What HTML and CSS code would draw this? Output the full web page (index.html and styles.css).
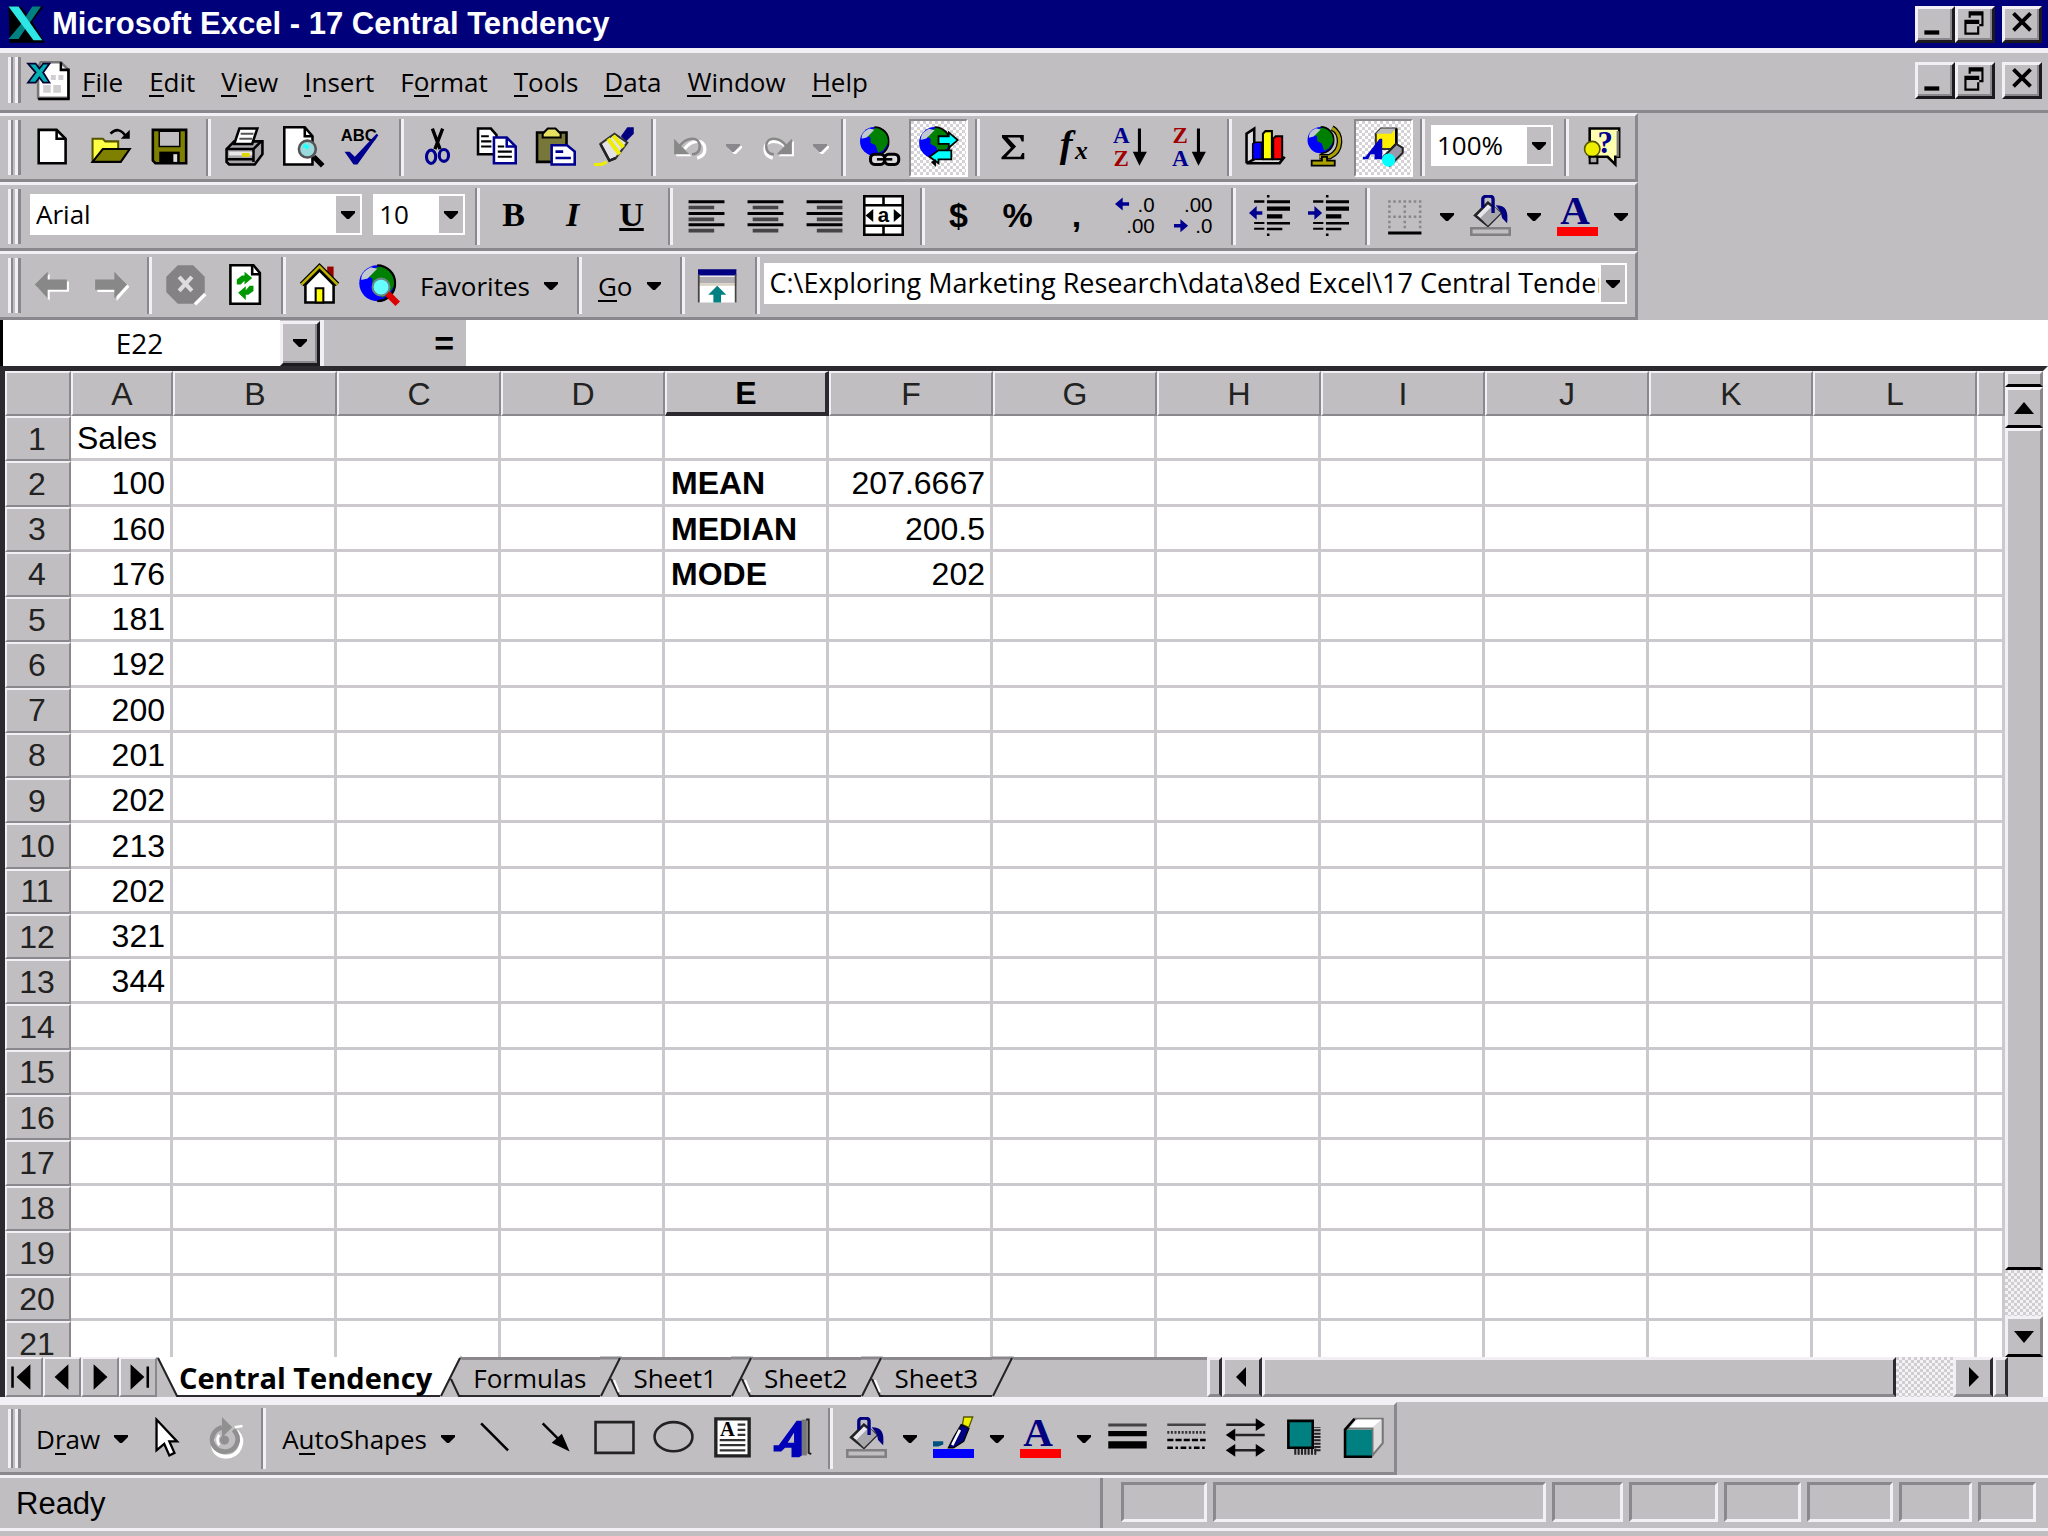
FILE: index.html
```
<!DOCTYPE html>
<html lang="en">
<head>
  <meta charset="UTF-8">
  <meta name="viewport" content="width=device-width, initial-scale=1.0">
  <title>Microsoft Excel - 17 Central Tendency</title>
  <link rel="stylesheet" href="styles.css">
</head>
<body>
  <svg class="defs" aria-hidden="true">
    <symbol id="caret" viewBox="0 0 14 8"><path d="M0 0h14v2L8 8H6L0 2z" fill="currentColor"/></symbol>
    <symbol id="minimize" viewBox="0 0 16 14"><path d="M3 10h7v2H3z"/></symbol>
    <symbol id="restore" viewBox="0 0 16 14">
      <path d="M5 1h7v7H9V7h2V3H6v1H5zM3 5h7v7H3zm1 2v4h5V7z" fill-rule="evenodd"/>
    </symbol>
    <symbol id="close" viewBox="0 0 16 14"><path d="M4 2l8 8M12 2l-8 8" stroke="#000" stroke-width="1.8"/></symbol>
    <symbol id="globe" viewBox="0 0 12 12">
      <circle cx="6" cy="6" r="5.6" fill="#00f"/>
      <path d="M5 1.500c3-2 5 0 6 2l.5 3-2 3-2 1-1-3-2-1 0-2-2-1z" fill="#008000"/>
      <path d="M1 5c0-2 1-3 3-4l2 .5-2 2-1 1z" fill="#c0c8d0"/>
      <path d="M6 .4a5.600 5.600 0 0 1 0 11.200" fill="none" stroke="#000" stroke-width=".7"/>
    </symbol>
    <symbol id="bucket" viewBox="0 0 16 16">
      <path d="M2 8l5-5 5 4-5 5z" fill="#e8e8ec" stroke="#222"/>
      <path d="M4 9l5-5 3 3-5 5z" fill="#a8a8ac"/>
      <path d="M5 5V1.500C5 0 9 0 9 1.500V7" fill="none" stroke="#000080" stroke-width="1.300"/>
      <path d="M10 4c4 0 5 2 4.500 7l-2-2-.5-2.500z" fill="#000080"/>
      <path d="M.5 13h15v2.500H.5z" fill="#c0bec0" stroke="#808080"/>
    </symbol>
  </svg>

  <header class="titlebar">
    <svg class="logo" viewBox="0 0 16 16">
      <path d="M1 1h5l3 4 3-4h3l-4.500 6 5 8.500H1.500z" fill="#000"/>
      <path d="M10.500 1H14L5 14H1l5-6z" fill="#008080"/>
      <path d="M1 1h4l9.500 13.500H11z" fill="#2ee6e6"/>
    </svg>
    <h1>Microsoft Excel - 17 Central Tendency</h1>
    <div class="winbuttons">
      <button aria-label="Minimize"><svg><use href="#minimize"/></svg></button>
      <button aria-label="Restore"><svg><use href="#restore"/></svg></button>
      <button aria-label="Close"><svg><use href="#close"/></svg></button>
    </div>
  </header>

  <nav class="menubar">
    <i class="grip"></i>
    <svg class="docicon" viewBox="0 0 17 16">
      <path d="M5 1h8l3 3v11H4V3z" fill="#fff" stroke="#777"/>
      <path d="M13 1v3h3v11.500H4" fill="none" stroke="#000"/>
      <path d="M9 6h2v2H9zM12 6h2v2h-2zM6 10h3v3H6zM10 10h3v3h-3z" fill="#d0ced0"/>
      <path d="M0 1.500h3l1.500 2 1.500-2h2.500L6 5l2.500 4H6L4.500 7 3 9H0l3-4z" fill="#00b0b0" stroke="#003" stroke-width=".7"/>
    </svg>
    <button><u>F</u>ile</button>
    <button><u>E</u>dit</button>
    <button><u>V</u>iew</button>
    <button><u>I</u>nsert</button>
    <button>F<u>o</u>rmat</button>
    <button><u>T</u>ools</button>
    <button><u>D</u>ata</button>
    <button><u>W</u>indow</button>
    <button><u>H</u>elp</button>
    <div class="winbuttons">
      <button aria-label="Minimize workbook"><svg><use href="#minimize"/></svg></button>
      <button aria-label="Restore workbook"><svg><use href="#restore"/></svg></button>
      <button aria-label="Close workbook"><svg><use href="#close"/></svg></button>
    </div>
  </nav>

  <section class="dock">
    <!-- standard -->
    <div class="toolbar">
      <i class="grip"></i>
      <button class="tool" aria-label="New"><svg viewBox="0 0 16 16">
        <path d="M3 1.500h7l3.500 3.500v9.500H3z" fill="#fff" stroke="#000"/><path d="M10 1.500V5h3.500" fill="none" stroke="#000"/>
      </svg></button>
      <button class="tool" aria-label="Open"><svg viewBox="0 0 16 16">
        <path d="M1 14V5h4l1 1h5v3" fill="#ff4" stroke="#550" stroke-width=".8"/>
        <path d="M1 14l4-5h10.500L12 14z" fill="#808000" stroke="#000" stroke-width=".8"/>
        <path d="M8 3c2-2 4-2 6 1" fill="none" stroke="#000"/><path d="M12 5h3.500V1.500z"/>
      </svg></button>
      <button class="tool" aria-label="Save"><svg viewBox="0 0 16 16">
        <path d="M1.500 1.500h13v13H2.500l-1-1z" fill="#808000" stroke="#000"/>
        <path d="M4 2h8v6H4z" fill="#c0bec0" stroke="#000" stroke-width=".6"/><path d="M4 10h8v4.500H4z"/><path d="M9.500 11H11v3H9.500z" fill="#ddd"/>
      </svg></button>
      <i class="sep"></i>
      <button class="tool" aria-label="Print"><svg viewBox="0 0 16 16">
        <path d="M1 9l3-3h11v5l-3 4H2l-1-1z" fill="#a8a6a8" stroke="#000"/>
        <path d="M4 7l2-6h7l-2 6z" fill="#fff" stroke="#000"/>
        <path d="M6.500 3h5M6 5h5" stroke="#555" stroke-width=".8"/>
        <path d="M1 9h10.500l3-3M1 13h11M11.500 9v5" fill="none" stroke="#000"/><path d="M2 10h9v1.500H2z" fill="#e8e8e8"/><path d="M7 10.500h3V12H7z" fill="#e0d800"/>
      </svg></button>
      <button class="tool" aria-label="Print Preview"><svg viewBox="0 0 16 16">
        <path d="M.5.500h8L11.500 4v11H.5z" fill="#fff" stroke="#000"/><path d="M8.500.500V4h3" fill="none" stroke="#000"/>
        <circle cx="9.500" cy="9" r="3.300" fill="#9adada" stroke="#555"/><path d="M8 7.500l2 1" stroke="#2ff" stroke-width="1.500"/><path d="M12 12l3.500 3.500" stroke="#000" stroke-width="2"/>
      </svg></button>
      <button class="tool" aria-label="Spelling"><svg viewBox="0 0 16 16">
        <text x="6.500" y="6" class="abc" font-size="6.500">ABC</text>
        <path d="M1 10h2l2 2 8.500-9 .7.600L6 15H4.500z" fill="#000090"/>
      </svg></button>
      <i class="sep"></i>
      <button class="tool" aria-label="Cut"><svg viewBox="0 0 16 16">
        <path d="M6 1l3 8M10 1L7 9" stroke="#000" stroke-width="1.300"/>
        <ellipse cx="5.500" cy="12" rx="1.800" ry="2.600" fill="none" stroke="#000090" stroke-width="1.200"/><ellipse cx="10.500" cy="11.500" rx="1.800" ry="2.300" fill="none" stroke="#000090" stroke-width="1.200"/>
      </svg></button>
      <button class="tool" aria-label="Copy"><svg viewBox="0 0 16 16">
        <path d="M.8 1h5L8 3.500V11H.8z" fill="#fff" stroke="#000"/><path d="M2 4h3M2 6h4M2 8h4" stroke="#000" stroke-width=".8"/>
        <path d="M7 4.500h5L15.500 8v6.500H7z" fill="#fff" stroke="#000090"/><path d="M12 4.500V8h3.500" fill="none" stroke="#000090"/><path d="M8.500 8H11M8.500 10H14M8.500 12H14" stroke="#000" stroke-width=".8"/>
      </svg></button>
      <button class="tool" aria-label="Paste"><svg viewBox="0 0 16 16">
        <path d="M.8 2.500h11.500v11.500H.8z" fill="#77773a" stroke="#000"/><path d="M3 4.500V3l2-2h3l2 2v1.500z" fill="#e8e060" stroke="#000" stroke-width=".8"/>
        <path d="M6.500 7.500h6l3 2.500v5h-9z" fill="#fff" stroke="#000090"/><path d="M8 10h3M8 12.500h6" stroke="#000090"/>
      </svg></button>
      <button class="tool" aria-label="Format Painter"><svg viewBox="0 0 16 16">
        <path d="M10.500 4L13 .5h2.500V3L12.500 6z" fill="#000080"/><path d="M2.500 7L8 3l5 3.500-4.500 6L6 13.500z" fill="#e4e2e4" stroke="#333" stroke-width=".8"/>
        <path d="M5.500 5l4.500 6M7.500 3.800l4 4.500" stroke="#ee0" stroke-width="1.600"/><path d="M2.500 7L6 13.500l2.500-1" fill="none" stroke="#222"/><path d="M0 15h3l2-1" fill="none" stroke="#ee0" stroke-width="1.200"/>
      </svg></button>
      <i class="sep"></i>
      <button class="tool" aria-label="Undo" disabled><svg viewBox="0 0 16 16">
        <path d="M5 8c3-4 8-4 8 0 0 2-1 3-3 3.500" fill="none" stroke="#fff" stroke-width="1.300" transform="translate(1 1)"/>
        <path d="M2 5v6h6z" fill="#fff" transform="translate(.8 .8)"/><path d="M4 8c3-4 8-4 8 0 0 2-1 3-3 3" fill="none" stroke="#888"/><path d="M2 5v6h6z" fill="#888"/>
      </svg></button>
      <button class="drop disabled" aria-label="Undo list" disabled><svg><use href="#caret"/></svg></button>
      <button class="tool" aria-label="Redo" disabled><svg viewBox="0 0 16 16">
        <g transform="matrix(-1 0 0 1 16 0)"><path d="M4 8c3-4 9-4 9 0 0 2-1 3-3 3.500" fill="none" stroke="#fff" stroke-width="1.300" transform="translate(-.5 1)"/>
        <path d="M2 5v6h6z" fill="#fff" transform="translate(-.8 .8)"/><path d="M4 8c3-4 8-4 8 0 0 2-1 3-3 3" fill="none" stroke="#888"/><path d="M2 5v6h6z" fill="#888"/></g>
      </svg></button>
      <button class="drop disabled" aria-label="Redo list" disabled><svg><use href="#caret"/></svg></button>
      <i class="sep"></i>
      <button class="tool" aria-label="Insert Hyperlink"><svg viewBox="0 0 16 16">
        <use href="#globe" x="0" y="0" width="12" height="12"/>
        <rect x="4.500" y="11" width="5.500" height="4" rx="1.600" fill="#ddd" stroke="#000" stroke-width="1.200"/><rect x="10" y="11" width="5.500" height="4" rx="1.600" fill="#ddd" stroke="#000" stroke-width="1.200"/><path d="M7 13h6" stroke="#000"/>
      </svg></button>
      <button class="tool pressed" aria-label="Web Toolbar"><svg viewBox="0 0 16 16">
        <use href="#globe" x="0" y="0" width="13" height="13"/>
        <path d="M8 4h4V2.500l3.500 3L12 8.500V7H8zM13 9.500v3.500H8v1.500L4.500 12 8 9.500z" fill="#0ff" stroke="#000" stroke-width=".7"/>
        <path d="M5 14l2 2V13z"/>
      </svg></button>
      <i class="sep"></i>
      <button class="tool" aria-label="AutoSum"><svg viewBox="0 0 16 16">
        <path d="M3.500 3.500h8.500V6h-.8l-.7-1.500H5.700L9 8l-3.800 4h5.500l.7-1.500h.8V13H3.300v-.8L7 8.500 3.500 4.500z"/>
      </svg></button>
      <button class="tool" aria-label="Paste Function"><svg viewBox="0 0 16 16">
        <text x="5.500" y="12" class="glyph italic" font-size="15">f</text><text x="11.500" y="13" class="glyph italic" font-size="10">x</text>
      </svg></button>
      <button class="tool" aria-label="Sort Ascending"><svg viewBox="0 0 16 16">
        <text x="4" y="6.500" class="glyph" font-size="9" fill="#000090">A</text><text x="4" y="15.500" class="glyph" font-size="9" fill="#a00000">Z</text>
        <path d="M10.500 1h1.200v9H14l-2.900 5.500L8.500 10h2z"/>
      </svg></button>
      <button class="tool" aria-label="Sort Descending"><svg viewBox="0 0 16 16">
        <text x="4" y="6.500" class="glyph" font-size="9" fill="#a00000">Z</text><text x="4" y="15.500" class="glyph" font-size="9" fill="#000090">A</text>
        <path d="M10.500 1h1.200v9H14l-2.900 5.500L8.500 10h2z"/>
      </svg></button>
      <i class="sep"></i>
      <button class="tool" aria-label="Chart Wizard"><svg viewBox="0 0 16 16">
        <path d="M.6 14.500V3l3-2v12l-3 1.500h12.900l2-2.500" fill="#ddd" stroke="#000"/>
        <path d="M3 7l1-.7h2.500V13H3z" fill="#00f" stroke="#000" stroke-width=".6"/><path d="M7 3l1-1h2.500v11H7z" fill="#ff0" stroke="#000" stroke-width=".8"/><path d="M11 5l1-1h2.500v9H11z" fill="#f00" stroke="#000" stroke-width=".8"/>
      </svg></button>
      <button class="tool" aria-label="Map"><svg viewBox="0 0 16 16">
        <path d="M11 .8c4 2 4 9-1 11.200H6" fill="none" stroke="#000" stroke-width="2.200"/><path d="M11 .8c4 2 4 9-1 11.200H6" fill="none" stroke="#aaa000" stroke-width="1.200"/>
        <use href="#globe" x="1" y="0" width="11" height="11"/><path d="M7 12h2v1.500h3v2H3v-2h4z" fill="#aaa000" stroke="#000" stroke-width=".7"/>
      </svg></button>
      <button class="tool pressed" aria-label="Drawing"><svg viewBox="0 0 16 16">
        <path d="M5 3l2-2h6v6l-2 2H5z" fill="#fe0" stroke="#333" stroke-width=".8"/><path d="M5 3l2-2h6l-2 2z" fill="#bbb"/><path d="M13 1v6l-2 2" fill="none" stroke="#000"/>
        <path d="M0 12h1L6.500 5h1v8H4.500v-2H3l-1 2H0z" fill="#0000c8"/>
        <path d="M8 12l5-5 2.500 1.500v2l-5 5z" fill="#99a" stroke="#222" stroke-width=".8"/><circle cx="10" cy="13.300" r="2.600" fill="#0ff"/>
      </svg></button>
      <i class="sep"></i>
      <div class="combo zoom"><select aria-label="Zoom"><option>100%</option></select><svg><use href="#caret"/></svg></div>
      <i class="sep"></i>
      <button class="tool" aria-label="Office Assistant"><svg viewBox="0 0 16 16">
        <path d="M3 1h11.500v11H13v3l-3-3H3z" fill="#ffffb0" stroke="#000"/><path d="M14 2v10" stroke="#777"/>
        <text x="9" y="10.500" class="glyph" font-size="12" fill="#000090">?</text>
        <circle cx="4" cy="9" r="3" fill="#ee0" stroke="#550" stroke-width=".6"/><path d="M3 12h3v2.500H3z" fill="#aaa" stroke="#000" stroke-width=".8"/>
      </svg></button>
    </div>

    <!-- formatting -->
    <div class="toolbar">
      <i class="grip"></i>
      <div class="combo font"><select aria-label="Font"><option>Arial</option></select><svg><use href="#caret"/></svg></div>
      <div class="combo size"><select aria-label="Font Size"><option>10</option></select><svg><use href="#caret"/></svg></div>
      <i class="sep"></i>
      <button class="tool letter" aria-label="Bold">B</button>
      <button class="tool letter italic" aria-label="Italic">I</button>
      <button class="tool letter" aria-label="Underline"><u>U</u></button>
      <i class="sep"></i>
      <button class="tool" aria-label="Align Left"><svg viewBox="0 0 16 16">
        <path d="M1 2h14v1.200H1zM1 6.600h14v1.200H1zM1 11h14v1.200H1z"/><path d="M1 4.200h10v1.400H1zM1 8.800h10v1.400H1zM1 13.200h10v1.400H1z" fill="#444"/>
      </svg></button>
      <button class="tool" aria-label="Center"><svg viewBox="0 0 16 16">
        <path d="M1 2h14v1.200H1zM1 6.600h14v1.200H1zM1 11h14v1.200H1z"/><path d="M3 4.200h10v1.400H3zM3 8.800h10v1.400H3zM3 13.200h10v1.400H3z" fill="#444"/>
      </svg></button>
      <button class="tool" aria-label="Align Right"><svg viewBox="0 0 16 16">
        <path d="M1 2h14v1.200H1zM1 6.600h14v1.200H1zM1 11h14v1.200H1z"/><path d="M5 4.200h10v1.400H5zM5 8.800h10v1.400H5zM5 13.200h10v1.400H5z" fill="#444"/>
      </svg></button>
      <button class="tool" aria-label="Merge and Center"><svg viewBox="0 0 16 16">
        <path d="M.5.500h15v15H.5z" fill="#fff" stroke="#000"/><path d="M0 4h16M0 12h16M8 0v4M8 12v4" stroke="#000"/>
        <text x="8" y="10.500" class="abc" font-size="8">a</text><path d="M1 8l3-2.500v5zM15 8l-3-2.500v5z"/>
      </svg></button>
      <i class="sep"></i>
      <button class="tool letter sans" aria-label="Currency Style">$</button>
      <button class="tool letter sans" aria-label="Percent Style">%</button>
      <button class="tool letter sans" aria-label="Comma Style">,</button>
      <button class="tool" aria-label="Increase Decimal"><svg viewBox="0 0 16 16">
        <text x="15.500" y="6.500" class="num" font-size="8">.0</text><text x="15.500" y="15" class="num" font-size="8">.00</text>
        <path d="M0 3.500l3-2.500v1.800h2.500v1.400H3V6z" fill="#000090"/>
      </svg></button>
      <button class="tool" aria-label="Decrease Decimal"><svg viewBox="0 0 16 16">
        <text x="15" y="6.500" class="num" font-size="8">.00</text><text x="15" y="15" class="num" font-size="8">.0</text>
        <path d="M5.500 12l-3-2.500v1.800H0v1.400h2.500v1.800z" fill="#000090"/>
      </svg></button>
      <i class="sep"></i>
      <button class="tool" aria-label="Decrease Indent"><svg viewBox="0 0 16 16">
        <path d="M2 2h4v1H2zM7 2h9v1.200H7zM7 4.500h9v1.600H7zM7 7.500h6v1.700H7zM2 10.500h4v.8H2zM7 10.500h9v1H7zM2 12.800h4v.8H2zM7 12.800h6v1H7zM7 0h1v1H7zM7 15h1v1H7z"/>
        <path d="M0 7l3-2.700v2h2.200v1.400H3v2z" fill="#000090"/>
      </svg></button>
      <button class="tool" aria-label="Increase Indent"><svg viewBox="0 0 16 16">
        <path d="M2 2h4v1H2zM7 2h9v1.200H7zM7 4.500h9v1.600H7zM7 7.500h6v1.700H7zM2 10.500h4v.8H2zM7 10.500h9v1H7zM2 12.800h4v.8H2zM7 12.800h6v1H7zM7 0h1v1H7zM7 15h1v1H7z"/>
        <path d="M5.500 7l-3-2.700v2H0v1.400h2.500v2z" fill="#000090"/>
      </svg></button>
      <i class="sep"></i>
      <button class="tool" aria-label="Borders"><svg viewBox="0 0 16 16">
        <path d="M2 2.500h13M2 8.500h13M2.500 2v11M8.500 2v11M14.500 2v11" stroke="#888" stroke-dasharray="1 1"/><path d="M2 14.200h13v1.200H2z"/>
      </svg></button>
      <button class="drop" aria-label="Border styles"><svg><use href="#caret"/></svg></button>
      <button class="tool" aria-label="Fill Color"><svg><use href="#bucket"/></svg></button>
      <button class="drop" aria-label="Fill colors"><svg><use href="#caret"/></svg></button>
      <button class="tool" aria-label="Font Color"><svg viewBox="0 0 16 16">
        <text x="7" y="11.500" class="glyph" font-size="16" fill="#000080">A</text><path d="M0 12.500h16V16H0z" fill="#f00"/>
      </svg></button>
      <button class="drop" aria-label="Font colors"><svg><use href="#caret"/></svg></button>
    </div>

    <!-- web -->
    <div class="toolbar">
      <i class="grip"></i>
      <button class="tool" aria-label="Back" disabled><svg viewBox="0 0 16 16">
        <path d="M1.500 8l5-5v3H14v4H6.500v3.500z" fill="#fff" transform="translate(.8 .8)"/><path d="M1.500 8l5-5v3H14v4H6.500v3.500z" fill="#888"/>
      </svg></button>
      <button class="tool" aria-label="Forward" disabled><svg viewBox="0 0 16 16">
        <path d="M14.500 8l-5-5v3H2v4h7.500v3.500z" fill="#fff" transform="translate(.9 .9)"/><path d="M14.500 8l-5-5v3H2v4h7.500v3.500z" fill="#888"/>
      </svg></button>
      <i class="sep"></i>
      <button class="tool" aria-label="Stop" disabled><svg viewBox="0 0 16 16">
        <path d="M15.500 11.500l-4 4" stroke="#fff" stroke-width="2"/><path d="M5 .5h6l4.500 4.500v6L11 15.500H5L.5 11V5z" fill="#848284"/><path d="M5.500 5l5 5.500M10.500 5l-5 5.500" stroke="#ddd" stroke-width="1.600"/>
      </svg></button>
      <button class="tool" aria-label="Refresh"><svg viewBox="0 0 16 16">
        <path d="M2.500.500h9l2.500 3v12H2.500z" fill="#fff" stroke="#000"/><path d="M11 .5V4h3" fill="none" stroke="#000"/>
        <path d="M5 8V6l2-1.500h1V3l3 2.500-3 2.500V6.500L6.500 8zM11.500 8.500v2l-2 1.500h-1v2l-3-2.800 3-2.500V10.200L10 8.500z" fill="#009800"/>
      </svg></button>
      <i class="sep"></i>
      <button class="tool" aria-label="Start Page"><svg viewBox="0 0 16 16">
        <path d="M11 1h2.500v6H11z" fill="#900"/><path d="M2.500 8l5.500-5.500L13.500 8v7h-11z" fill="#fff" stroke="#000"/>
        <path d="M1 8l7-7 7 7" fill="none" stroke="#000" stroke-width="2"/><path d="M1 8l7-7 7 7" fill="none" stroke="#bbb000"/>
        <path d="M6.500 9.500h3V15h-3z" fill="#ff0" stroke="#000" stroke-width=".8"/>
      </svg></button>
      <button class="tool" aria-label="Search the Web"><svg viewBox="0 0 16 16">
        <use href="#globe" x="0" y="0" width="15" height="15"/>
        <circle cx="9" cy="9" r="3.300" fill="#6ff" stroke="#688" stroke-width=".8"/><path d="M11.500 11.500l4 4" stroke="#d00" stroke-width="2.500"/>
      </svg></button>
      <button class="textmenu">Favorites <svg><use href="#caret"/></svg></button>
      <i class="sep"></i>
      <button class="textmenu"><span><u>G</u>o</span> <svg><use href="#caret"/></svg></button>
      <i class="sep"></i>
      <button class="tool" aria-label="Show Only Web Toolbar"><svg viewBox="0 0 16 16">
        <path d="M0 2.500h15V15H0z" fill="#fff"/><path d="M0 5h15v2.500H0z" fill="#b0aeb0"/><path d="M0 7.500h15V8.500H0z" fill="#d8d0c0"/><path d="M0 2h15v2.500H0z" fill="#000080"/>
        <path d="M.3 4v11M14.700 4v11" stroke="#444" stroke-width=".7"/><path d="M7.500 8.500L11 12H9v3H6v-3H4z" fill="#008080"/>
      </svg></button>
      <i class="sep"></i>
      <div class="combo address"><select aria-label="Address"><option>C:\Exploring Marketing Research\data\8ed Excel\17 Central Tendency.xls</option></select><svg><use href="#caret"/></svg></div>
    </div>
  </section>

  <section class="formulabar">
    <input class="namebox" aria-label="Name Box" value="E22">
    <button class="bevel namedrop" aria-label="Names"><svg><use href="#caret"/></svg></button>
    <button class="equals" aria-label="Edit Formula">=</button>
    <input class="formula" aria-label="Formula">
  </section>

  <main class="book">
    <div class="cells">
      <table>
        <colgroup><col class="rowcol"><col class="first"><col span="11" class="col"><col></colgroup>
        <thead>
          <tr><th></th><th>A</th><th>B</th><th>C</th><th>D</th><th class="current">E</th><th>F</th><th>G</th><th>H</th><th>I</th><th>J</th><th>K</th><th>L</th><th></th></tr>
        </thead>
        <tbody>
          <tr><th>1</th><td class="text">Sales</td><td></td><td></td><td></td><td></td><td></td><td></td><td></td><td></td><td></td><td></td><td></td><td></td></tr>
          <tr><th>2</th><td>100</td><td></td><td></td><td></td><td class="text strong">MEAN</td><td>207.6667</td><td></td><td></td><td></td><td></td><td></td><td></td><td></td></tr>
          <tr><th>3</th><td>160</td><td></td><td></td><td></td><td class="text strong">MEDIAN</td><td>200.5</td><td></td><td></td><td></td><td></td><td></td><td></td><td></td></tr>
          <tr><th>4</th><td>176</td><td></td><td></td><td></td><td class="text strong">MODE</td><td>202</td><td></td><td></td><td></td><td></td><td></td><td></td><td></td></tr>
          <tr><th>5</th><td>181</td><td></td><td></td><td></td><td></td><td></td><td></td><td></td><td></td><td></td><td></td><td></td><td></td></tr>
          <tr><th>6</th><td>192</td><td></td><td></td><td></td><td></td><td></td><td></td><td></td><td></td><td></td><td></td><td></td><td></td></tr>
          <tr><th>7</th><td>200</td><td></td><td></td><td></td><td></td><td></td><td></td><td></td><td></td><td></td><td></td><td></td><td></td></tr>
          <tr><th>8</th><td>201</td><td></td><td></td><td></td><td></td><td></td><td></td><td></td><td></td><td></td><td></td><td></td><td></td></tr>
          <tr><th>9</th><td>202</td><td></td><td></td><td></td><td></td><td></td><td></td><td></td><td></td><td></td><td></td><td></td><td></td></tr>
          <tr><th>10</th><td>213</td><td></td><td></td><td></td><td></td><td></td><td></td><td></td><td></td><td></td><td></td><td></td><td></td></tr>
          <tr><th>11</th><td>202</td><td></td><td></td><td></td><td></td><td></td><td></td><td></td><td></td><td></td><td></td><td></td><td></td></tr>
          <tr><th>12</th><td>321</td><td></td><td></td><td></td><td></td><td></td><td></td><td></td><td></td><td></td><td></td><td></td><td></td></tr>
          <tr><th>13</th><td>344</td><td></td><td></td><td></td><td></td><td></td><td></td><td></td><td></td><td></td><td></td><td></td><td></td></tr>
          <tr><th>14</th><td></td><td></td><td></td><td></td><td></td><td></td><td></td><td></td><td></td><td></td><td></td><td></td><td></td></tr>
          <tr><th>15</th><td></td><td></td><td></td><td></td><td></td><td></td><td></td><td></td><td></td><td></td><td></td><td></td><td></td></tr>
          <tr><th>16</th><td></td><td></td><td></td><td></td><td></td><td></td><td></td><td></td><td></td><td></td><td></td><td></td><td></td></tr>
          <tr><th>17</th><td></td><td></td><td></td><td></td><td></td><td></td><td></td><td></td><td></td><td></td><td></td><td></td><td></td></tr>
          <tr><th>18</th><td></td><td></td><td></td><td></td><td></td><td></td><td></td><td></td><td></td><td></td><td></td><td></td><td></td></tr>
          <tr><th>19</th><td></td><td></td><td></td><td></td><td></td><td></td><td></td><td></td><td></td><td></td><td></td><td></td><td></td></tr>
          <tr><th>20</th><td></td><td></td><td></td><td></td><td></td><td></td><td></td><td></td><td></td><td></td><td></td><td></td><td></td></tr>
          <tr><th>21</th><td></td><td></td><td></td><td></td><td></td><td></td><td></td><td></td><td></td><td></td><td></td><td></td><td></td></tr>
        </tbody>
      </table>
    </div>

    <div class="vscroll">
      <div class="splitbox"></div>
      <button aria-label="Scroll up"><svg viewBox="0 0 16 16"><path d="M3 11h10L8 5z"/></svg></button>
      <div class="thumb"></div>
      <div class="track"></div>
      <button aria-label="Scroll down"><svg viewBox="0 0 16 16"><path d="M3 5h10l-5 6z"/></svg></button>
    </div>

    <div class="bottom">
      <div class="sheets">
        <button class="nav" aria-label="First sheet"><svg viewBox="0 0 16 16"><path d="M2 3h1.200v10H2zM11 2v12L4.500 8z"/></svg></button>
        <button class="nav" aria-label="Previous sheet"><svg viewBox="0 0 16 16"><path d="M11 2v12L4.500 8z"/></svg></button>
        <button class="nav" aria-label="Next sheet"><svg viewBox="0 0 16 16"><path d="M5 2v12l6.500-6z"/></svg></button>
        <button class="nav" aria-label="Last sheet"><svg viewBox="0 0 16 16"><path d="M4.500 2v12L11 8zM12 3h1.200v10H12z"/></svg></button>
        <svg class="slant" viewBox="0 0 22 40"><path d="M1 0h21v38h-2z" fill="#fff"/><path d="M1 1l19 38h2" fill="none" stroke="#222" stroke-width="2"/></svg>
        <button class="tab active">Central Tendency</button>
        <svg class="slant" viewBox="0 0 22 40"><path d="M0 0h20L2 38H0z" fill="#fff"/><path d="M20 1h2" stroke="#8a888c" stroke-width="3"/><path d="M20 1L1 39M11 22l8 17h3" fill="none" stroke="#222" stroke-width="2"/></svg>
        <button class="tab">Formulas</button>
        <svg class="slant" viewBox="0 0 22 40"><path d="M0 1h22" stroke="#8a888c" stroke-width="3"/><path d="M20 1L1 39M11 22l8 17h3" fill="none" stroke="#222" stroke-width="2"/><path d="M14 23l5 12" stroke="#fff" stroke-width="2"/></svg>
        <button class="tab">Sheet1</button>
        <svg class="slant" viewBox="0 0 22 40"><path d="M0 1h22" stroke="#8a888c" stroke-width="3"/><path d="M20 1L1 39M11 22l8 17h3" fill="none" stroke="#222" stroke-width="2"/><path d="M14 23l5 12" stroke="#fff" stroke-width="2"/></svg>
        <button class="tab">Sheet2</button>
        <svg class="slant" viewBox="0 0 22 40"><path d="M0 1h22" stroke="#8a888c" stroke-width="3"/><path d="M20 1L1 39M11 22l8 17h3" fill="none" stroke="#222" stroke-width="2"/><path d="M14 23l5 12" stroke="#fff" stroke-width="2"/></svg>
        <button class="tab">Sheet3</button>
        <svg class="slant" viewBox="0 0 22 40"><path d="M0 1h22" stroke="#8a888c" stroke-width="3"/><path d="M20 1L1 39" fill="none" stroke="#222" stroke-width="2"/></svg>
        <div class="filler"></div>
      </div>
      <div class="hscroll">
        <div class="splitter"></div>
        <button aria-label="Scroll left"><svg viewBox="0 0 16 16"><path d="M10 3v10L5 8z"/></svg></button>
        <div class="thumb"></div>
        <div class="track"></div>
        <button aria-label="Scroll right"><svg viewBox="0 0 16 16"><path d="M6 3v10l5-5z"/></svg></button>
        <div class="splitter"></div>
      </div>
      <div class="corner"></div>
    </div>
  </main>

  <section class="dock lower">
    <div class="toolbar">
      <i class="grip"></i>
      <button class="textmenu draw"><span>D<u>r</u>aw</span> <svg><use href="#caret"/></svg></button>
      <button class="tool" aria-label="Select Objects"><svg viewBox="0 0 16 16">
        <path d="M4.500 1v12l3-2.500 2 4.500 2-1-2-4.500h3z" fill="#fff" stroke="#000" stroke-width=".9"/>
      </svg></button>
      <button class="tool" aria-label="Free Rotate" disabled><svg viewBox="0 0 16 16">
        <path d="M12 4.500c4 4 1 10-4 10-4 0-6-3-5-7" fill="none" stroke="#fff" stroke-width="1.500" transform="translate(.7 1)"/>
        <path d="M11.500 5c3.500 3.500 1 8.500-3.500 8.500C2.500 13.500 1 6 7 4" fill="none" stroke="#909090" stroke-width="1.800"/><path d="M7 0l4 4-4 4z" fill="#909090"/><circle cx="8" cy="9" r="1.800" fill="#909090"/>
        <path d="M6 7c-1 1-1 3 0 4M12 4l3-.5" fill="none" stroke="#fff"/>
      </svg></button>
      <i class="sep"></i>
      <button class="textmenu"><span>A<u>u</u>toShapes</span> <svg><use href="#caret"/></svg></button>
      <button class="tool" aria-label="Line"><svg viewBox="0 0 16 16"><path d="M2 2.500l10.500 10.500" stroke="#000"/></svg></button>
      <button class="tool" aria-label="Arrow"><svg viewBox="0 0 16 16"><path d="M3 2.500l8 8" stroke="#000"/><path d="M13.500 13.500L6.500 10l4-3.500z"/></svg></button>
      <button class="tool" aria-label="Rectangle"><svg viewBox="0 0 16 16"><path d="M.6 2h14.800v12H.6z" fill="none" stroke="#222"/></svg></button>
      <button class="tool" aria-label="Oval"><svg viewBox="0 0 16 16"><ellipse cx="8" cy="7.700" rx="7.400" ry="5.700" fill="none" stroke="#222"/></svg></button>
      <button class="tool" aria-label="Text Box"><svg viewBox="0 0 16 16">
        <path d="M1.500.700h13v14.500h-13z" fill="#fff" stroke="#222" stroke-width="1.300"/><text x="6" y="7.500" class="glyph" font-size="8">A</text>
        <path d="M10 3h3M10 5h3M10 7h3M3 9h10M3 11h10M3 13h10" stroke="#333" stroke-width=".9"/>
      </svg></button>
      <button class="tool" aria-label="WordArt"><svg viewBox="0 0 16 16">
        <path d="M12 1h2v14h-2z" fill="#777"/><path d="M13.700 1h1v13l1 .5" fill="none" stroke="#222" stroke-width=".8"/>
        <path d="M1 11h2L10 1.500h2V15l-1 .7H8V12H5.500L4 13.500H1zM9 6l-2.500 4H9z" fill="#0000b8" fill-rule="evenodd"/>
      </svg></button>
      <i class="sep"></i>
      <button class="tool" aria-label="Fill Color"><svg><use href="#bucket"/></svg></button>
      <button class="drop" aria-label="Fill colors"><svg><use href="#caret"/></svg></button>
      <button class="tool" aria-label="Line Color"><svg viewBox="0 0 16 16">
        <path d="M12 0h3.500L14 4l-2.500-1z" fill="#ee0" stroke="#550" stroke-width=".5"/><path d="M11 3l3 1.500-2 5-4 2.500H6l2-4z" fill="#000080" stroke="#000" stroke-width=".5"/><path d="M10.500 5l-3 6" stroke="#fff"/>
        <path d="M0 9.500h4v1.200l-2 .8H0z" fill="#005080"/><path d="M0 12.500h16V16H0z" fill="#00f"/>
      </svg></button>
      <button class="drop" aria-label="Line colors"><svg><use href="#caret"/></svg></button>
      <button class="tool" aria-label="Font Color"><svg viewBox="0 0 16 16">
        <text x="7" y="11.500" class="glyph" font-size="16" fill="#000080">A</text><path d="M0 12.500h16V16H0z" fill="#f00"/>
      </svg></button>
      <button class="drop" aria-label="Font colors"><svg><use href="#caret"/></svg></button>
      <button class="tool" aria-label="Line Style"><svg viewBox="0 0 16 16"><path d="M.5 2.500h15v1.200H.5z" fill="#444"/><path d="M.5 5.500h15v2H.5zM.5 9.500h15v2.800H.5z"/></svg></button>
      <button class="tool" aria-label="Dash Style"><svg viewBox="0 0 16 16"><path d="M.5 3h15" stroke="#444"/><path d="M.5 6h15" stroke="#333" stroke-dasharray=".8 .6"/><path d="M.5 9h15" stroke="#000" stroke-dasharray="2.400 .8"/><path d="M.5 12h15" stroke="#000" stroke-dasharray="2.200 1 1 1"/></svg></button>
      <button class="tool" aria-label="Arrow Style"><svg viewBox="0 0 16 16"><path d="M.5 3H13M4 7h11.500M3 13h10" stroke="#222"/><path d="M12 .5L15.700 3 12 5.500zM4 4.500L.3 7 4 9.500zM12 10.500l3.700 2.500-3.700 2.500zM4 10.500L.3 13 4 15.500z"/></svg></button>
      <button class="tool" aria-label="Shadow"><svg viewBox="0 0 16 16"><path d="M4 13.500h9V4" fill="none" stroke="#222" stroke-width="2.500" stroke-dasharray=".8 .5"/><path d="M1.700 1.500h9.500v10.500H1.700z" fill="#008080" stroke="#000"/></svg></button>
      <button class="tool" aria-label="3-D"><svg viewBox="0 0 16 16"><path d="M1 4.500L4.500.700h11v9.500L11.500 15V4.500z" fill="#ddd" stroke="#777" stroke-width=".8"/><path d="M3 4L5.500 1H15l-3.500 3z" fill="#fff"/><path d="M.8 5h10.500v10.300H.8z" fill="#008080"/><path d="M4.500.700L.8 5v10.500h10.500" fill="none" stroke="#000"/></svg></button>
    </div>
  </section>

  <footer class="statusbar">
    <div class="message">Ready</div>
    <div class="panels"><i></i><i></i><i></i><i></i><i></i><i></i><i></i><i></i></div>
  </footer>
</body>
</html>
```
FILE: styles.css
```
:root {
  --face: #c0bec0;
  --light: #f2f0f4;
  --shade: #8a888c;
  --dark: #2c2a2e;
  --line: #cbc9cd;
  --navy: #00007b;
  --ui: "Open Sans", "Noto Sans", sans-serif;
  --cell: "Liberation Sans", Arial, sans-serif;
}

* {
  box-sizing: border-box;
}

body {
  margin: 0;
  height: 100vh;
  display: flex;
  flex-direction: column;
  overflow: hidden;
  background: var(--face);
  color: #000;
  font-family: var(--ui);
  font-size: 26px;
  line-height: 36px;
}

button,
input,
select {
  margin: 0;
  padding: 0;
  border: 0;
  border-radius: 0;
  background: none;
  color: inherit;
  font: inherit;
}

button {
  flex: none;
  display: flex;
  align-items: center;
  justify-content: center;
}

svg {
  display: block;
  flex: none;
  overflow: visible;
}

.defs {
  position: absolute;
  width: 0;
  height: 0;
}

/* title and menu */
.titlebar {
  flex: none;
  height: 48px;
  display: flex;
  align-items: center;
  padding: 0 6px;
  background: var(--navy);
  color: #fff;
}

.logo {
  width: 40px;
  height: 40px;
}

h1 {
  flex: 1;
  margin: 0 0 0 6px;
  font: bold 31px/40px var(--cell);
}

.winbuttons {
  display: flex;
  margin-left: auto;
}

.winbuttons button,
.bevel {
  width: 40px;
  height: 37px;
  background: var(--face);
  border: 3px solid;
  border-color: var(--light) #1c1a1e #1c1a1e var(--light);
  box-shadow: inset -2px -2px 0 var(--shade);
}

.winbuttons button:last-child {
  margin-left: 7px;
}

.winbuttons svg {
  width: 34px;
  height: 30px;
}

.menubar {
  flex: none;
  height: 65px;
  display: flex;
  align-items: center;
  padding: 0 6px 3px 8px;
  border-top: 5px solid var(--light);
  border-bottom: 3px solid var(--shade);
}

.menubar > button {
  padding: 4px 13px 0;
}

.menubar u,
.textmenu u {
  display: inline-block;
  line-height: 28px;
  text-decoration: none;
  border-bottom: 2px solid #000;
}

.docicon {
  width: 43px;
  height: 42px;
  margin: 0 -2px 0 6px;
}

.grip {
  flex: none;
  align-self: stretch;
  width: 14px;
  margin: 4px 0;
  background: linear-gradient(90deg, var(--light) 0 3px, var(--shade) 3px 5px, var(--face) 5px 7px, var(--light) 7px 10px, var(--shade) 10px 13px, var(--face) 13px);
}

/* toolbars */
.dock {
  flex: none;
  display: flex;
  flex-direction: column;
  align-items: flex-start;
}

.toolbar {
  width: 1638px;
  height: 69px;
  display: flex;
  align-items: center;
  padding-left: 8px;
  border-top: 3px solid var(--light);
  border-bottom: 3px solid var(--shade);
  border-right: 3px solid var(--shade);
}

.tool {
  width: 59px;
  height: 58px;
  padding-bottom: 3px;
}

.tool svg {
  width: 41px;
  height: 41px;
}

.pressed {
  background: repeating-conic-gradient(#fff 0 25%, #d4d2d4 0 50%) 0 0 / 6px 6px;
  border: 2px solid;
  border-color: var(--shade) #fff #fff var(--shade);
}

.drop {
  width: 28px;
  height: 58px;
}

.drop svg,
.textmenu svg,
.combo svg,
.namedrop svg {
  width: 14px;
  height: 8px;
}

.disabled {
  color: var(--shade);
}

.disabled svg {
  filter: drop-shadow(2px 2px 0 #fff);
}

.sep {
  flex: none;
  align-self: stretch;
  width: 5px;
  margin: 3px 4px 3px 7px;
  border-left: 2px solid var(--shade);
  border-right: 3px solid var(--light);
}

.letter {
  font: bold 34px/40px "Liberation Serif", serif;
}

.sans {
  font: bold 34px/40px var(--cell);
}

.italic {
  font-style: italic;
}

.glyph {
  font-family: "Liberation Serif", serif;
  font-weight: bold;
  text-anchor: middle;
}

.abc {
  font-family: "Liberation Sans", sans-serif;
  font-weight: bold;
  text-anchor: middle;
}

.num {
  font-family: "Liberation Sans", sans-serif;
  text-anchor: end;
}

.textmenu {
  gap: 14px;
  padding: 0 12px;
}

.combo {
  position: relative;
  height: 41px;
  margin-bottom: 4px;
  background: #fff;
}

.combo select {
  appearance: none;
  display: block;
  width: 100%;
  height: 100%;
  padding: 0 32px 2px 4px;
  border: 2px solid #fff;
  background: linear-gradient(var(--face), var(--face)) right / 24px 100% no-repeat;
  text-overflow: clip;
}

.combo svg {
  position: absolute;
  top: 17px;
  right: 7px;
  pointer-events: none;
}

.zoom {
  width: 122px;
  margin-left: 2px;
  margin-right: 4px;
}

.font {
  width: 333px;
  margin-left: 8px;
  margin-right: 11px;
}

.size {
  width: 92px;
  margin-right: 3px;
}

.address {
  flex: 1;
  margin-right: 8px;
}

.address select {
  padding-right: 26px;
  font-size: 27px;
}

/* formula bar */
.formulabar {
  flex: none;
  height: 46px;
  display: flex;
  align-items: center;
  border-left: 3px solid #000;
}

.formulabar input {
  height: 100%;
  background: #fff;
  outline: 0;
}

.namebox {
  width: 277px;
  padding-right: 4px;
  text-align: center;
  font-size: 28px;
}

.namedrop {
  height: 45px;
}

.equals {
  width: 146px;
  height: 100%;
  justify-content: flex-end;
  padding-right: 12px;
  border-left: 4px solid var(--light);
  font: bold 34px/40px var(--cell);
}

.formula {
  flex: 1;
  min-width: 0;
}

/* workbook */
.book {
  flex: 1;
  min-height: 0;
  display: grid;
  grid-template-columns: 1fr 38px;
  grid-template-rows: minmax(0, 1fr) 40px;
  border-top: 5px solid var(--dark);
  border-left: 5px solid var(--dark);
  border-right: 5px solid #fff;
}

.cells {
  overflow: hidden;
  background: #fff;
}

table {
  width: 100%;
  height: 101%;
  table-layout: fixed;
  border-spacing: 0;
  font: 32px/36px var(--cell);
}

.rowcol {
  width: 66px;
}

.first {
  width: 102px;
}

.col {
  width: 164px;
}

th,
td {
  padding: 0;
  white-space: nowrap;
}

th {
  background: var(--face);
  border-top: 2px solid var(--light);
  border-left: 2px solid var(--light);
  border-right: 2px solid var(--shade);
  border-bottom: 2px solid var(--shade);
  color: #222;
  font-weight: normal;
}

thead th {
  height: 45px;
}

tbody th {
  padding-right: 2px;
}

.current {
  border-right: 4px solid var(--dark);
  border-bottom: 4px solid var(--dark);
  color: #000;
  font-weight: bold;
}

/* line-height stays under the row header's, so every row gets the same height */
td {
  padding: 2px 5px 0 0;
  border-right: 3px solid var(--line);
  border-bottom: 3px solid var(--line);
  line-height: 32px;
  text-align: right;
}

.text {
  padding: 2px 0 0 6px;
  text-align: left;
}

.strong {
  font-weight: bold;
}

.vscroll,
.hscroll {
  display: flex;
}

.vscroll {
  flex-direction: column;
}

.vscroll button,
.vscroll .thumb,
.splitbox {
  background: var(--face);
  border: 3px solid;
  border-color: var(--light) var(--shade) #000 var(--light);
}

.vscroll button {
  height: 41px;
}

.vscroll svg,
.hscroll svg {
  width: 32px;
  height: 32px;
}

.splitbox {
  height: 16px;
}

.vscroll .thumb {
  flex: 18;
}

.track {
  flex: 1;
  background: repeating-conic-gradient(#f4f2f4 0 25%, #d0ced0 0 50%) 0 0 / 6px 6px;
}

.bottom {
  grid-column: 1 / -1;
  display: flex;
}

.sheets {
  flex: 3;
  min-width: 0;
  display: flex;
}

.nav {
  width: 38px;
  border: 2px solid;
  border-color: var(--light) var(--shade) var(--shade) var(--light);
}

.nav svg {
  width: 34px;
  height: 34px;
}

.slant {
  width: 22px;
  height: 40px;
}

.tab {
  padding: 0 14px 0 11px;
  border-top: 3px solid var(--shade);
  border-bottom: 2px solid var(--dark);
}

.active {
  padding: 0 8px 0 0;
  background: #fff;
  border-top-color: #fff;
  font-size: 29px;
  font-weight: bold;
}

.filler {
  flex: 1;
  border-top: 3px solid var(--shade);
}

.hscroll {
  flex: 2;
}

.hscroll button,
.hscroll .thumb,
.splitter {
  background: var(--face);
  border: 3px solid;
  border-color: var(--light) var(--dark) var(--shade) var(--light);
}

.hscroll button {
  width: 40px;
}

.hscroll .thumb {
  flex: 11;
}

.splitter {
  width: 15px;
}

.corner {
  width: 35px;
}

/* drawing toolbar and status */
.lower {
  border-top: 5px solid var(--light);
}

.lower .toolbar {
  width: 1397px;
  height: 73px;
}

.draw {
  padding: 0 8px 0 14px;
}

.draw ~ .textmenu {
  padding-right: 12px;
}

.statusbar {
  flex: none;
  height: 61px;
  display: flex;
  padding-right: 12px;
  border-top: 3px solid var(--light);
  border-bottom: 5px solid var(--face);
  box-shadow: inset 0 -3px 0 var(--light);
}

.message {
  flex: 1095;
  padding: 6px 16px 0;
  border-right: 3px solid var(--shade);
  margin-bottom: 3px;
  font: 31px/40px var(--cell);
}

.panels {
  flex: 938;
  display: grid;
  grid-template-columns: 86fr 332fr 71fr 89fr 76fr 86fr 73fr 58fr;
  gap: 6px;
  padding: 4px 0 9px 18px;
}

.panels i {
  border: 3px solid;
  border-color: var(--shade) var(--light) var(--light) var(--shade);
}
```
